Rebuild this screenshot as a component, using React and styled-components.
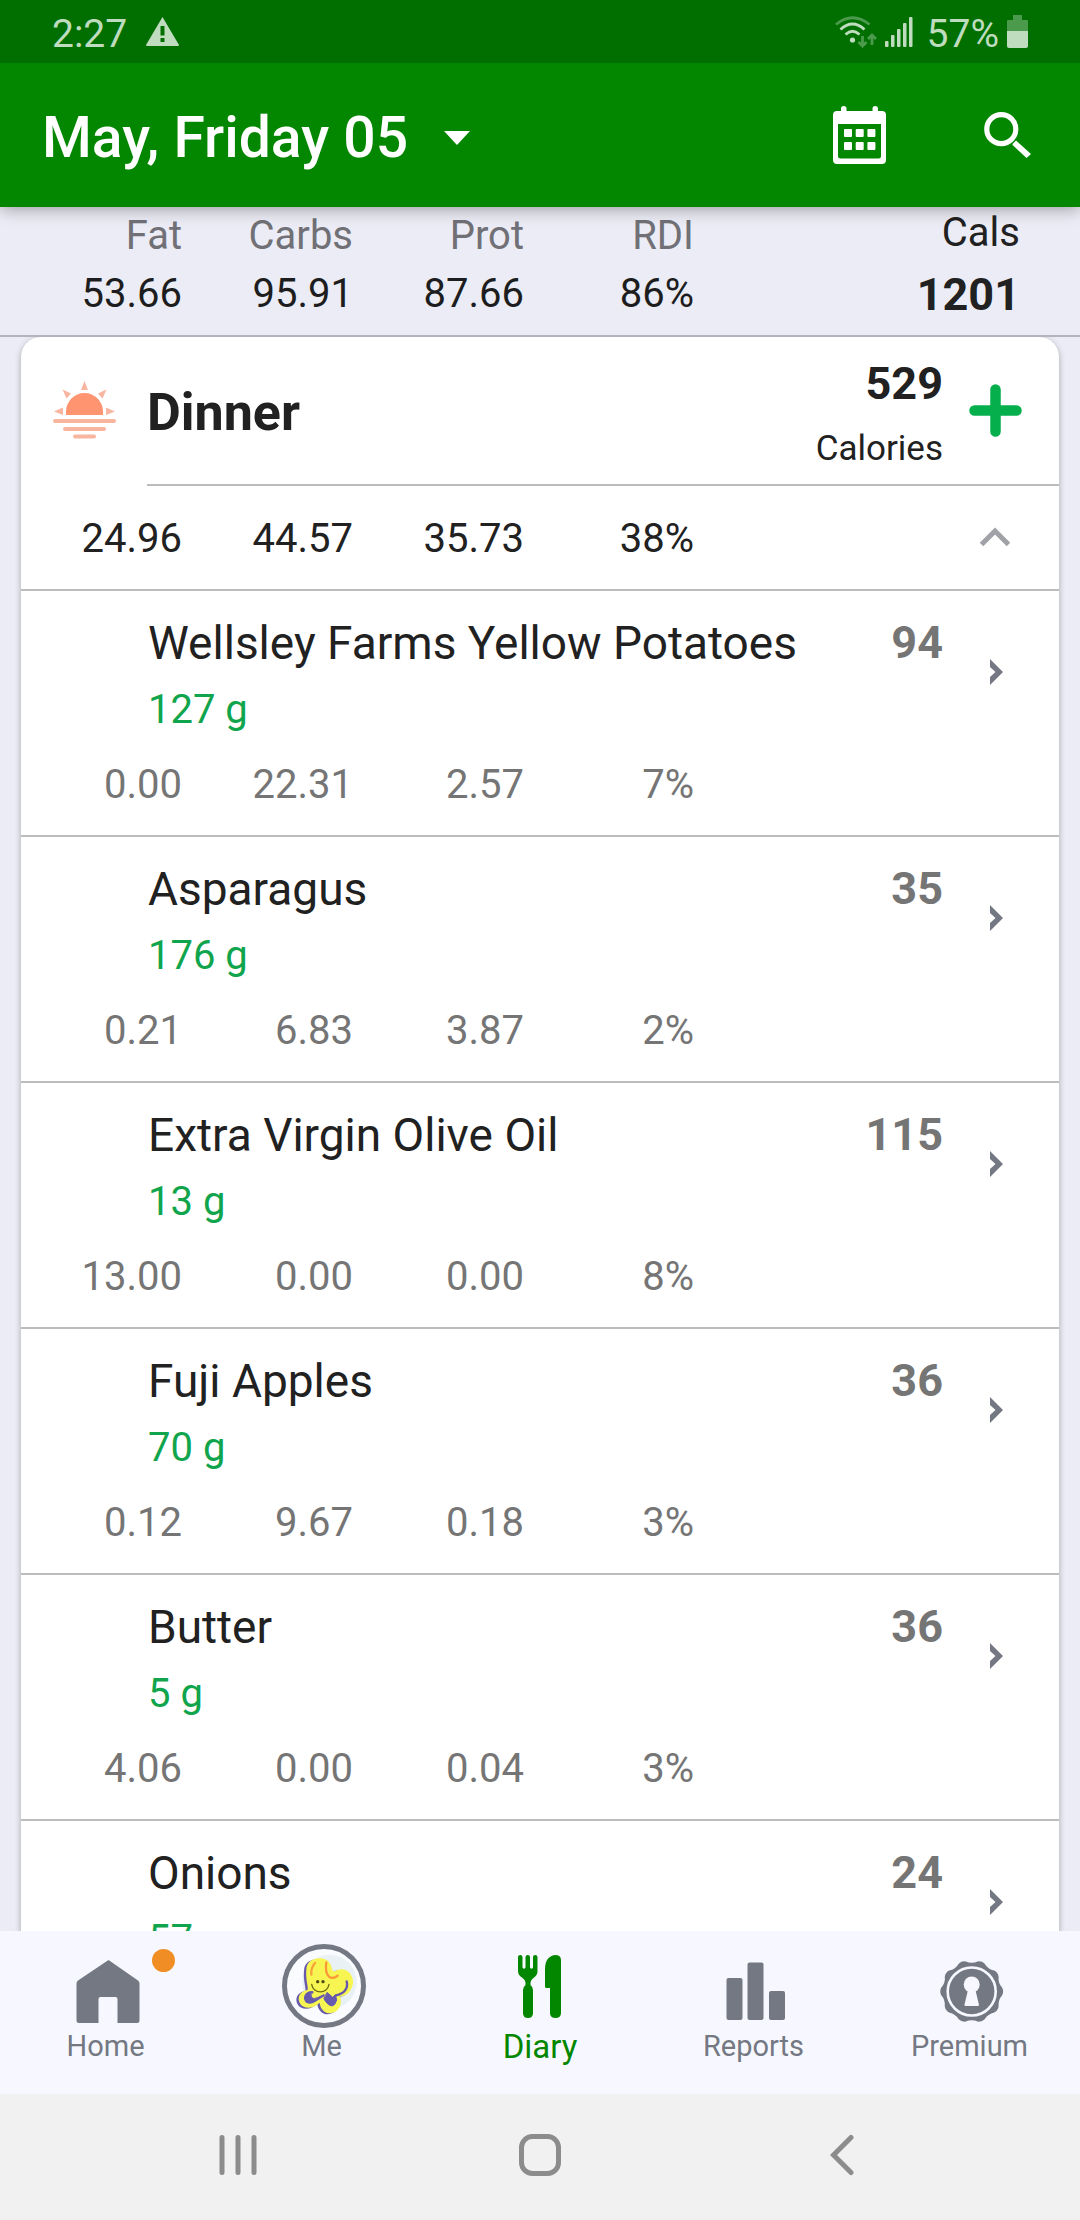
import React, { useState } from 'react';
import styled, { createGlobalStyle } from 'styled-components';

const GlobalStyle = createGlobalStyle`
  * { box-sizing: border-box; }
  body {
    margin: 0;
    font-family: Roboto, "Liberation Sans", sans-serif;
    color: #212121;
    background: #ebecf5;
  }
  button {
    padding: 0;
    border: 0;
    background: none;
    font: inherit;
    color: inherit;
    cursor: pointer;
  }
  svg { display: block; }
`;

const Screen = styled.div`
  display: flex;
  flex-direction: column;
  height: 100vh;
  overflow: hidden;
`;

const StatusBar = styled.div`
  position: relative;
  z-index: 2;
  display: flex;
  flex: none;
  align-items: center;
  justify-content: space-between;
  height: 63px;
  padding: 0 52px;
  background: #006f00;
  color: #bfdcbf;
  font-size: 39px;
`;

const StatusGroup = styled.div`
  display: flex;
  align-items: center;
  gap: ${(props) => props.$gap}px;
`;

const StatusText = styled.span`
  padding-top: 4px;
  line-height: 46px;
`;

const Battery = styled.div`
  display: flex;
  align-items: center;
  gap: 8px;
`;

const Header = styled.header`
  position: relative;
  z-index: 1;
  display: flex;
  flex: none;
  align-items: center;
  justify-content: space-between;
  height: 144px;
  padding: 0 49px 0 42px;
  background: #048700;
  color: #fff;
  box-shadow: 0 2px 16px rgba(0, 0, 0, 0.35);
`;

const DateButton = styled.button`
  display: flex;
  align-items: center;
  gap: 36px;
  padding-top: 6px;
  font-size: 57px;
  font-weight: 500;
  line-height: 68px;
`;

const HeaderActions = styled.div`
  display: flex;
  align-items: center;
  gap: 98px;
`;

const SummaryTable = styled.table`
  flex: none;
  width: 100%;
  table-layout: fixed;
  border-collapse: separate;
  border-spacing: 0;
  border-bottom: 2px solid #b4b4bc;
  font-size: 40px;
  line-height: 46px;
  text-align: right;
  th, td { vertical-align: top; }
  th {
    padding: 6px 0 0;
    color: #707076;
    font-weight: 400;
  }
  td {
    padding: 12px 0 16px;
    color: #1d1d20;
  }
  th:last-child {
    padding-right: 60px;
    color: #212121;
    line-height: 40px;
  }
  td:last-child {
    padding-right: 60px;
    color: #212121;
    font-size: 45px;
    font-weight: 700;
    line-height: 48px;
  }
`;

const Scroll = styled.main`
  flex: 1;
  min-height: 0;
  padding: 0 21px;
  overflow-y: auto;
  scrollbar-width: none;
`;

const Card = styled.section`
  border-radius: 20px 20px 0 0;
  background: #fff;
  box-shadow: 0 2px 6px rgba(0, 0, 0, 0.3);
`;

const MealHeader = styled.div`
  display: flex;
`;

const MealIcon = styled.div`
  display: flex;
  align-items: center;
  width: 126px;
  padding: 0 0 4px 32px;
`;

const MealBody = styled.div`
  display: flex;
  flex: 1;
  align-items: center;
  height: 149px;
  border-bottom: 2px solid #bcbcbe;
`;

const MealName = styled.h2`
  flex: 1;
  margin: 0;
  padding-top: 4px;
  font-size: 52px;
  font-weight: 700;
  line-height: 60px;
`;

const MealTotal = styled.div`
  padding-top: 12px;
  text-align: right;
`;

const MealCalories = styled.div`
  font-size: 45px;
  font-weight: 700;
  line-height: 64px;
`;

const MealUnit = styled.div`
  font-size: 35px;
  line-height: 66px;
`;

const AddButton = styled.button`
  display: flex;
  justify-content: center;
  width: 104px;
  margin-right: 12px;
`;

const FoodTable = styled.table`
  width: 100%;
  table-layout: fixed;
  border-collapse: separate;
  border-spacing: 0;
  font-size: 40px;
  line-height: 46px;
  text-align: right;
  th, td {
    padding: 0;
    vertical-align: top;
    font-weight: 400;
  }
`;

const MacroRow = styled.tr`
  color: ${(props) => (props.$total ? '#212121' : '#757575')};
  td {
    padding: ${(props) => (props.$total ? '30px 0 27px' : '19px 0 27px')};
    border-bottom: 2px solid #bcbcbe;
  }
`;

const FoodName = styled.th`
  && {
    padding: 18px 0 0 127px;
    text-align: left;
  }
`;

const FoodLink = styled.a`
  display: block;
  color: #212121;
  font-size: 46px;
  line-height: 68px;
  text-decoration: none;
  white-space: nowrap;
`;

const Serving = styled.div`
  color: #10a54c;
  line-height: 66px;
`;

const FoodCalories = styled.td`
  && {
    padding-top: 18px;
    color: #757575;
    font-size: 45px;
    font-weight: 700;
    line-height: 68px;
  }
`;

const ArrowCell = styled.td`
  && { padding: 68px 10px 0 0; }
  svg { margin: 0 auto; }
`;

const Toggle = styled.button`
  display: flex;
  align-items: center;
  justify-content: center;
  width: 104px;
  height: 42px;
`;

const TabBar = styled.nav`
  display: flex;
  flex: none;
  padding: 13px 0 29px;
  background: #f7f8ff;
`;

const Tab = styled.a`
  display: flex;
  flex: 1;
  flex-direction: column;
  align-items: center;
  color: ${(props) => (props.$active ? '#048700' : '#747883')};
  font-size: ${(props) => (props.$active ? 33 : 29)}px;
  line-height: 37px;
  text-decoration: none;
`;

const TabIcon = styled.span`
  position: relative;
  width: 84px;
  height: 84px;
`;

const TabLabel = styled.span`
  padding-right: ${(props) => (props.$active ? 0 : 5)}px;
`;

const Dot = styled.span`
  position: absolute;
  top: 5px;
  left: 86px;
  width: 23px;
  height: 23px;
  border-radius: 50%;
  background: #f08e25;
`;

const SystemBar = styled.div`
  display: flex;
  flex: none;
  height: 126px;
  padding: 0 87px 4px;
  background: #f1f1f1;
`;

const SystemButton = styled.button`
  display: flex;
  flex: 1;
  align-items: center;
  justify-content: center;
`;

const WarningIcon = () => (
  <svg width="33" height="29" viewBox="0 0 33 29" fill="currentColor">
    <path fillRule="evenodd" d="M16.5 0L33 28Q33 29 32 29H1Q0 29 0 28ZM14.5 9V18.500H18.500V9ZM14.500 21V25H18.500V21Z" />
  </svg>
);

const WifiIcon = () => (
  <svg width="42" height="32" viewBox="0 0 42 32" fill="none" stroke="currentColor" strokeWidth="2.800">
    <path d="M1 8.500Q17.500 -5 34.500 8.500" opacity="0.4" />
    <path d="M5.500 13.500Q17.500 2.500 29.500 13.500" />
    <path d="M10.500 18.500Q17.500 12 24.500 18.500" />
    <circle cx="17.500" cy="24" r="2.600" fill="currentColor" stroke="none" />
    <path d="M27.500 20V30M23.500 26L27.500 30L31.500 26M37 29V19M33 23L37 19L41 23" opacity="0.4" />
  </svg>
);

const SignalIcon = () => (
  <svg width="28" height="30" viewBox="0 0 28 30" fill="currentColor">
    <rect x="0" y="24" width="3.500" height="6" rx="1" />
    <rect x="6" y="18" width="3.500" height="12" rx="1" />
    <rect x="12" y="12" width="3.500" height="18" rx="1" />
    <rect x="18" y="6" width="3.500" height="24" rx="1" />
    <rect x="24" y="0" width="3.500" height="30" rx="1" />
  </svg>
);

const BatteryIcon = () => (
  <svg width="21" height="33" viewBox="0 0 21 33" fill="currentColor">
    <path d="M6 0H15V5H20Q21 5 21 6V16H0V6Q0 5 1 5H6Z" opacity="0.4" />
    <path d="M0 16H21V31Q21 33 19 33H2Q0 33 0 31Z" />
  </svg>
);

const CaretIcon = () => (
  <svg width="26" height="14" viewBox="0 0 26 14" fill="currentColor">
    <path d="M0 0H26L13 14Z" />
  </svg>
);

const CalendarIcon = () => (
  <svg width="53" height="58" viewBox="0 0 53 58" fill="currentColor">
    <path fillRule="evenodd" d="M4 5H8V2.500Q8 0 10.700 0Q13.500 0 13.500 2.500V5H39.500V2.500Q39.500 0 42.200 0Q45 0 45 2.500V5H49Q53 5 53 9V54Q53 58 49 58H4Q0 58 0 54V9Q0 5 4 5ZM5 18V50Q5 52.500 7.500 52.500H45.500Q48 52.500 48 50V18Z" />
    {[11, 22.7, 34.4].map((x) => (
      <React.Fragment key={x}>
        <rect x={x} y="23" width="8" height="8" rx="1" />
        <rect x={x} y="36" width="8" height="8" rx="1" />
      </React.Fragment>
    ))}
  </svg>
);

const SearchIcon = () => (
  <svg width="47" height="46" viewBox="0 0 47 46" fill="none" stroke="currentColor">
    <circle cx="17.300" cy="17.200" r="14.500" strokeWidth="5.200" />
    <path d="M28.500 32L32 28.500L47 42L42.500 46L28.500 33Z" fill="currentColor" stroke="none" />
  </svg>
);

const SunsetIcon = () => (
  <svg width="63" height="58" viewBox="0 0 63 58" fill="#f8b5a0">
    <path d="M13 34V30.500A18.500 18.500 0 0 1 50 30.500V34Z" fill="#ff9470" />
    <path d="M31.500 0L35 9H28ZM9.500 8.500L18 12.500L13.500 17.500ZM53.500 8.500L45 12.500L49.500 17.500ZM1 30.500L10 26.500V34ZM62 30.500L53 26.500V34Z" />
    <path d="M2 40H61M12 48H51M22 55.500H41" stroke="#f8b5a0" strokeWidth="4" strokeLinecap="round" />
  </svg>
);

const PlusIcon = () => (
  <svg width="53" height="53" viewBox="0 0 53 53" stroke="#05b04c" strokeWidth="10.500" strokeLinecap="round">
    <path d="M26.500 5.500V47.500M5.500 26.500H47.500" />
  </svg>
);

const CollapseIcon = ({ open }) => (
  <svg width="32" height="20" viewBox="0 0 32 20" fill="none" stroke="#a0a2a7" strokeWidth="5">
    <path d={open ? 'M2.500 17.500L16 4L29.500 17.500' : 'M2.500 2.500L16 16L29.500 2.500'} />
  </svg>
);

const ArrowIcon = () => (
  <svg width="13" height="26" viewBox="0 0 13 26" fill="#747883">
    <path d="M0 0L13 13L0 26V18L5.500 13L0 8Z" />
  </svg>
);

const HomeIcon = () => (
  <svg width="84" height="84" viewBox="0 0 84 84" fill="currentColor">
    <path d="M42.500 16L72 36.500Q73.500 37.500 73.500 39.500V76.500Q73.500 79 71 79H51.500V55Q51.500 53 49.500 53H34.500Q32.500 53 32.500 55V79H13Q10.500 79 10.500 76.500V39.500Q10.500 37.500 12 36.500Z" />
  </svg>
);

const AVATAR_SHAPE = 'M80 74C88 44 140 40 152 68C155 76 156 88 164 88C190 70 222 92 219 124C216 148 200 162 180 164C190 188 174 212 150 214C132 214 120 198 119 182C104 198 74 204 61 186C50 168 58 148 82 144C88 140 74 112 80 74Z';

const AvatarIcon = () => (
  <svg width="84" height="84" viewBox="6 6 252 252" fill="none" strokeLinecap="round" strokeLinejoin="round">
    <circle cx="132" cy="132" r="118.500" fill="#fafbff" stroke="#747883" strokeWidth="15" />
    <circle cx="148" cy="120" r="82" fill="#e9f1f4" />
    <path d={AVATAR_SHAPE} fill="#6659ae" transform="translate(-7 3)" />
    <path d={AVATAR_SHAPE} fill="#f7f552" />
    <path d="M97 151C80 150 70 166 80 178C96 188 110 170 130 160" stroke="#6659ae" strokeWidth="8" />
    <path d="M84 154Q100 160 116 162L92 182Q76 182 76 166Z" fill="#6659ae" />
    <path d="M104 156Q96 162 102 164L126 154L140 142" stroke="#f7f552" strokeWidth="9" />
    <path d="M142 152L158 166L166 158L170 174Q166 190 156 192Q140 188 132 170Z" fill="#6659ae" stroke="#6659ae" strokeWidth="3" />
    <path d="M168 160C190 156 206 142 200 118" stroke="#6659ae" strokeWidth="7" />
    <path d="M105 63Q92 78 94 98" stroke="#fba13a" strokeWidth="7" />
    <path d="M139 61Q134 92 148 105Q160 112 173 101" stroke="#fb9838" strokeWidth="7" />
    <path d="M95 127C100 157 142 157 147 127" stroke="#6c6c12" strokeWidth="4" />
    <circle cx="113" cy="119" r="5" fill="#4d4d18" />
    <circle cx="129" cy="119" r="5" fill="#4d4d18" />
  </svg>
);

const DiaryIcon = () => (
  <svg width="84" height="84" viewBox="0 0 84 84" fill="currentColor">
    <path d="M20 13Q20 11 22.200 11Q24.500 11 24.500 13V23.500Q26 26 27.500 23.500V13Q27.500 11 29.800 11Q32 11 32 13V23.500Q33.500 26 35 23.500V13Q35 11 37.200 11Q39.500 11 39.500 13V27Q39.500 31 36 33.500Q32.500 36 32.500 38.500V41Q35 43 35 46V69Q35 74 30 74Q25 74 25 69V46Q25 43 27.500 41V38.500Q27.500 36 24 33.500Q20 31 20 27Z" />
    <path d="M57 11Q63 11 63 16V69Q63 74 57.500 74Q52 74 52 69V44H48.500Q47 44 47 42.500V25Q47 12.500 57 11Z" />
  </svg>
);

const ReportsIcon = () => (
  <svg width="84" height="84" viewBox="0 0 84 84" fill="currentColor">
    <rect x="12.500" y="34" width="16" height="42" rx="2" />
    <rect x="33.500" y="18.500" width="16" height="57.500" rx="2" />
    <rect x="55" y="47" width="16" height="29" rx="2" />
  </svg>
);

// ten-pointed seal edge
const sealPath = () => {
  const point = (angle, r) => {
    const a = (angle * Math.PI) / 180;
    return `${(41.7 + r * Math.cos(a)).toFixed(1)} ${(47.5 + r * Math.sin(a)).toFixed(1)}`;
  };
  let d = `M${point(-7, 30.7)}`;
  for (let i = 0; i < 10; i++) {
    const a = i * 36;
    d += `Q${point(a, 32.4)} ${point(a + 7, 30.7)}Q${point(a + 18, 27.5)} ${point(a + 29, 30.7)}`;
  }
  return `${d}Z`;
};

const PremiumIcon = () => (
  <svg width="84" height="84" viewBox="0 0 84 84" fill="currentColor">
    <path d={sealPath()} />
    <circle cx="41.700" cy="47.500" r="24" fill="none" stroke="#f7f8ff" strokeWidth="2.600" />
    <path d="M38 46L34.500 60.500Q34.200 62 35.700 62H47.700Q49.200 62 48.900 60.500L45.400 46Z" fill="#f7f8ff" />
    <circle cx="41.700" cy="40.500" r="8" fill="#f7f8ff" />
  </svg>
);

const RecentsIcon = () => (
  <svg width="38" height="42" viewBox="0 0 38 42" stroke="#8c8c8c" strokeWidth="5" strokeLinecap="round">
    <path d="M3 3.500V38.500M19 3.500V38.500M35 3.500V38.500" />
  </svg>
);

const SystemHomeIcon = () => (
  <svg width="42" height="42" viewBox="0 0 42 42" fill="none" stroke="#8c8c8c" strokeWidth="5">
    <rect x="2.500" y="2.500" width="37" height="37" rx="11" />
  </svg>
);

const BackIcon = () => (
  <svg width="24" height="42" viewBox="0 0 24 42" fill="none" stroke="#8c8c8c" strokeWidth="5" strokeLinecap="round">
    <path d="M21 3.500L3.500 21L21 38.500" />
  </svg>
);

const foods = [
  { name: 'Wellsley Farms Yellow Potatoes', serving: '127 g', calories: 94, macros: ['0.00', '22.31', '2.57', '7%'] },
  { name: 'Asparagus', serving: '176 g', calories: 35, macros: ['0.21', '6.83', '3.87', '2%'] },
  { name: 'Extra Virgin Olive Oil', serving: '13 g', calories: 115, macros: ['13.00', '0.00', '0.00', '8%'] },
  { name: 'Fuji Apples', serving: '70 g', calories: 36, macros: ['0.12', '9.67', '0.18', '3%'] },
  { name: 'Butter', serving: '5 g', calories: 36, macros: ['4.06', '0.00', '0.04', '3%'] },
  { name: 'Onions', serving: '57 g', calories: 24, macros: [] },
];

const tabs = [
  { label: 'Home', Icon: HomeIcon, dot: true },
  { label: 'Me', Icon: AvatarIcon },
  { label: 'Diary', Icon: DiaryIcon, active: true },
  { label: 'Reports', Icon: ReportsIcon },
  { label: 'Premium', Icon: PremiumIcon },
];

const Summary = () => (
  <SummaryTable>
    <colgroup>
      <col width="182" />
      <col width="171" />
      <col width="171" />
      <col width="170" />
      <col />
    </colgroup>
    <thead>
      <tr>
        <th>Fat</th>
        <th>Carbs</th>
        <th>Prot</th>
        <th>RDI</th>
        <th>Cals</th>
      </tr>
    </thead>
    <tbody>
      <tr>
        <td>53.66</td>
        <td>95.91</td>
        <td>87.66</td>
        <td>86%</td>
        <td>1201</td>
      </tr>
    </tbody>
  </SummaryTable>
);

const Food = ({ food }) => (
  <tbody>
    <tr>
      <FoodName colSpan={5} scope="rowgroup">
        <FoodLink href="#">{food.name}</FoodLink>
        <Serving>{food.serving}</Serving>
      </FoodName>
      <FoodCalories>{food.calories}</FoodCalories>
      <ArrowCell><ArrowIcon /></ArrowCell>
    </tr>
    <MacroRow>
      {food.macros.map((value, i) => <td key={i}>{value}</td>)}
      <td colSpan={7 - food.macros.length} />
    </MacroRow>
  </tbody>
);

const Meal = () => {
  const [open, setOpen] = useState(true);

  return (
    <Card>
      <MealHeader>
        <MealIcon><SunsetIcon /></MealIcon>
        <MealBody>
          <MealName>Dinner</MealName>
          <MealTotal>
            <MealCalories>529</MealCalories>
            <MealUnit>Calories</MealUnit>
          </MealTotal>
          <AddButton aria-label="Add food"><PlusIcon /></AddButton>
        </MealBody>
      </MealHeader>
      <FoodTable>
        <colgroup>
          <col width="161" />
          <col width="171" />
          <col width="171" />
          <col width="170" />
          <col />
          <col width="100" />
          <col width="116" />
        </colgroup>
        <tbody>
          <MacroRow $total>
            <td>24.96</td>
            <td>44.57</td>
            <td>35.73</td>
            <td>38%</td>
            <td colSpan={2} />
            <td>
              <Toggle aria-label="Toggle foods" aria-expanded={open} onClick={() => setOpen(!open)}>
                <CollapseIcon open={open} />
              </Toggle>
            </td>
          </MacroRow>
        </tbody>
        {open && foods.map((food) => <Food key={food.name} food={food} />)}
      </FoodTable>
    </Card>
  );
};

const App = () => {
  return (
    <>
      <GlobalStyle />
      <Screen>
        <StatusBar>
          <StatusGroup $gap={19}>
            <StatusText>2:27</StatusText>
            <WarningIcon />
          </StatusGroup>
          <StatusGroup $gap={14}>
            <StatusGroup $gap={8}>
              <WifiIcon />
              <SignalIcon />
            </StatusGroup>
            <Battery>
              <StatusText>57%</StatusText>
              <BatteryIcon />
            </Battery>
          </StatusGroup>
        </StatusBar>
        <Header>
          <DateButton>
            May, Friday 05
            <CaretIcon />
          </DateButton>
          <HeaderActions>
            <button aria-label="Calendar"><CalendarIcon /></button>
            <button aria-label="Search"><SearchIcon /></button>
          </HeaderActions>
        </Header>
        <Summary />
        <Scroll>
          <Meal />
        </Scroll>
        <TabBar>
          {tabs.map(({ label, Icon, dot, active }) => (
            <Tab key={label} href="#" $active={active}>
              <TabIcon>
                <Icon />
                {dot && <Dot />}
              </TabIcon>
              <TabLabel $active={active}>{label}</TabLabel>
            </Tab>
          ))}
        </TabBar>
        <SystemBar>
          <SystemButton aria-label="Recent apps"><RecentsIcon /></SystemButton>
          <SystemButton aria-label="Home screen"><SystemHomeIcon /></SystemButton>
          <SystemButton aria-label="Back"><BackIcon /></SystemButton>
        </SystemBar>
      </Screen>
    </>
  );
};

export default App;
